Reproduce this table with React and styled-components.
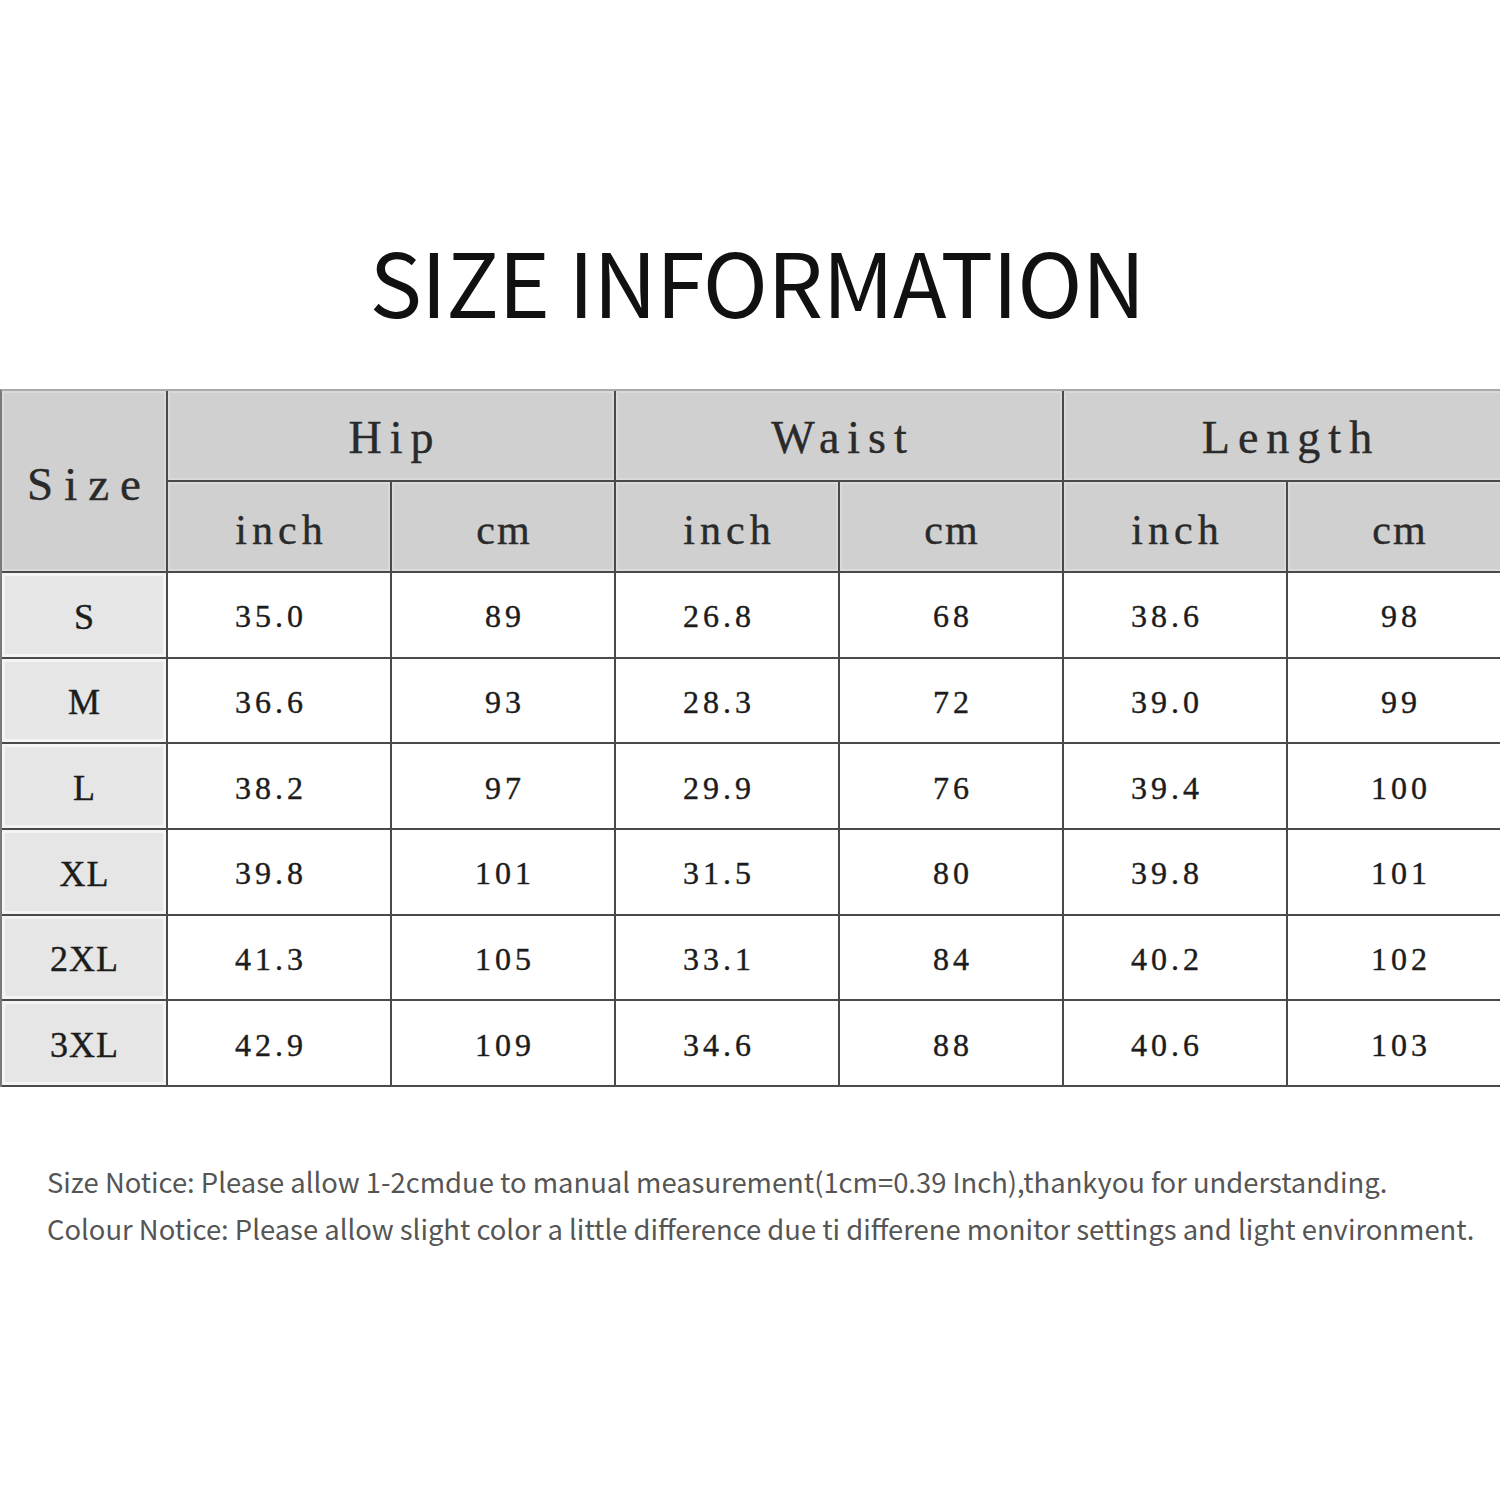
import styled, { createGlobalStyle } from "styled-components";

const GlobalStyle = createGlobalStyle`
  body {
    margin: 0;
    background: #ffffff;
  }
`;

const groups = ["Hip", "Waist", "Length"];

const rows = [
  { size: "S", values: ["35.0", "89", "26.8", "68", "38.6", "98"] },
  { size: "M", values: ["36.6", "93", "28.3", "72", "39.0", "99"] },
  { size: "L", values: ["38.2", "97", "29.9", "76", "39.4", "100"] },
  { size: "XL", values: ["39.8", "101", "31.5", "80", "39.8", "101"] },
  { size: "2XL", values: ["41.3", "105", "33.1", "84", "40.2", "102"] },
  { size: "3XL", values: ["42.9", "109", "34.6", "88", "40.6", "103"] },
];

const App = () => {
  return (
    <Page>
      <GlobalStyle />
      <Title>SIZE INFORMATION</Title>
      <TableClip>
        <Table>
          <HeadCell $rowSpan={2} $size={47} $spacing={11}>
            Size
          </HeadCell>
          {groups.map((g) => (
            <HeadCell key={g} $colSpan={2} $size={46} $spacing={8} $lift={4}>
              {g}
            </HeadCell>
          ))}
          {groups.map((g) => [
            <HeadCell key={g + "-in"} $size={42} $spacing={5}>
              inch
            </HeadCell>,
            <HeadCell key={g + "-cm"} $size={42} $spacing={2}>
              cm
            </HeadCell>,
          ])}
          {rows.map((row) => [
            <SizeCell key={row.size}>{row.size}</SizeCell>,
            ...row.values.map((v, i) => (
              <DataCell key={row.size + i} $inch={i % 2 === 0}>
                {v}
              </DataCell>
            )),
          ])}
        </Table>
      </TableClip>
      <Notes>
        <p>
          Size Notice: Please allow 1-2cmdue to manual measurement(1cm=0.39
          Inch),thankyou for understanding.
        </p>
        <p>
          Colour Notice: Please allow slight color a little difference due ti
          differene monitor settings and light environment.
        </p>
      </Notes>
    </Page>
  );
};

export default App;

const Page = styled.div`
  width: 1500px;
  height: 1500px;
  overflow: hidden;
  display: flex;
  flex-direction: column;
  background: #fff;
`;

const Title = styled.h1`
  margin: 236px 0 0 0;
  padding-left: 14px;
  font-family: "Noto Sans CJK SC", "Noto Sans", sans-serif;
  font-weight: 400;
  font-size: 88px;
  line-height: 88px;
  text-align: center;
  color: #111;
  letter-spacing: -0.8px;
`;

const TableClip = styled.div`
  margin-top: 65px;
  width: 1500px;
  overflow: hidden;
`;

const Table = styled.div`
  display: grid;
  grid-template-columns: 166px repeat(6, 224px);
  grid-template-rows: 91px 91px repeat(6, 85.67px);
  width: max-content;
  border-top: 2px solid #a9a9a9;
  border-left: 2px solid #7a7a7a;
  font-family: "Liberation Serif", "DejaVu Serif", serif;
  color: #1c1c1c;
`;

const Cell = styled.div`
  display: flex;
  align-items: center;
  justify-content: center;
  border-right: 2px solid #4a4a4a;
  border-bottom: 2px solid #4a4a4a;
  -webkit-text-stroke: 0.4px currentColor;
`;

const HeadCell = styled(Cell)`
  grid-row: span ${(p) => p.$rowSpan || 1};
  grid-column: span ${(p) => p.$colSpan || 1};
  background: #d0d0d0;
  box-shadow: inset 0 0 0 2px #dadada;
  font-size: ${(p) => p.$size}px;
  letter-spacing: ${(p) => p.$spacing}px;
  padding-left: ${(p) => p.$spacing}px;
  padding-top: ${(p) => (p.$lift ? 4 : 6)}px;
  color: #2a2a2a;
`;

const SizeCell = styled(Cell)`
  background: #e6e6e6;
  box-shadow: inset 0 0 0 3px #f4f4f4;
  font-size: 36px;
  letter-spacing: 1px;
  padding-left: 1px;
  padding-top: 4px;
`;

const DataCell = styled(Cell)`
  background: #fff;
  font-size: 32px;
  letter-spacing: 4px;
  padding-left: 4px;
  padding-right: ${(p) => (p.$inch ? "20px" : "0")};
  padding-top: 4px;
`;

const Notes = styled.div`
  margin-top: 71px;
  padding-left: 47px;
  font-family: "Noto Sans CJK SC", "Noto Sans", sans-serif;
  font-size: 27.4px;
  line-height: 47px;
  color: #555;
  font-weight: 400;

  p {
    margin: 0;
    white-space: nowrap;
  }
`;
